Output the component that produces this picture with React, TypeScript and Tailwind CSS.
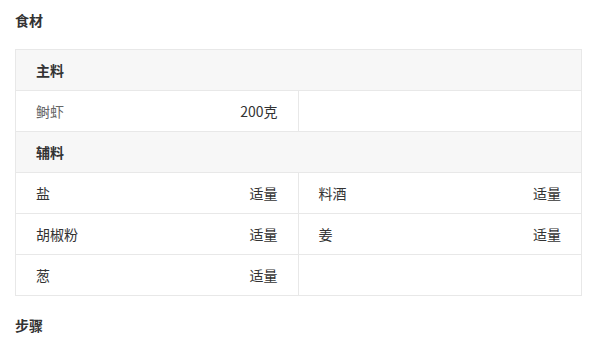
const groups = [
  { title: '主料', items: [['鲥虾', '200克', 'light']] },
  {
    title: '辅料',
    items: [
      ['盐', '适量'],
      ['料酒', '适量'],
      ['胡椒粉', '适量'],
      ['姜', '适量'],
      ['葱', '适量'],
    ],
  },
];

export default function App() {
  return (
    <div className="bg-white pl-[15px] pr-[12px] pt-[10px] text-[14px] leading-[20px] text-[#333]" style={{ fontFamily: '"Noto Sans CJK SC", "Noto Sans", sans-serif' }}>
      <h3 className="font-bold text-[#333] mb-[19px]">食材</h3>
      <div className="border border-[#e8e8e8]">
        {groups.map((g, gi) => {
          const cells: (string[] | null)[] = [...g.items];
          if (cells.length % 2) cells.push(null);
          return (
            <div key={g.title}>
              <div className="h-[41px] flex items-center px-5 bg-[#f7f7f7] border-b border-[#e8e8e8] font-bold text-[#333]">{g.title}</div>
              <div className="grid grid-cols-2">
                {cells.map((c, i) => {
                  const lastRow = gi === groups.length - 1 && i >= cells.length - 2;
                  return (
                    <div
                      key={i}
                      className={`flex items-center justify-between px-5 border-[#e8e8e8] ${lastRow ? 'h-10' : 'h-[41px] border-b'} ${i % 2 === 0 ? 'border-r' : ''}`}
                    >
                      {c && (
                        <>
                          <span className={c[2] ? 'text-[#666]' : 'text-[#333]'}>{c[0]}</span>
                          <span className="text-[#333]">{c[1]}</span>
                        </>
                      )}
                    </div>
                  );
                })}
              </div>
            </div>
          );
        })}
      </div>
      <h3 className="font-bold text-[#333] mt-[19px] pb-[6px]">步骤</h3>
    </div>
  );
}
